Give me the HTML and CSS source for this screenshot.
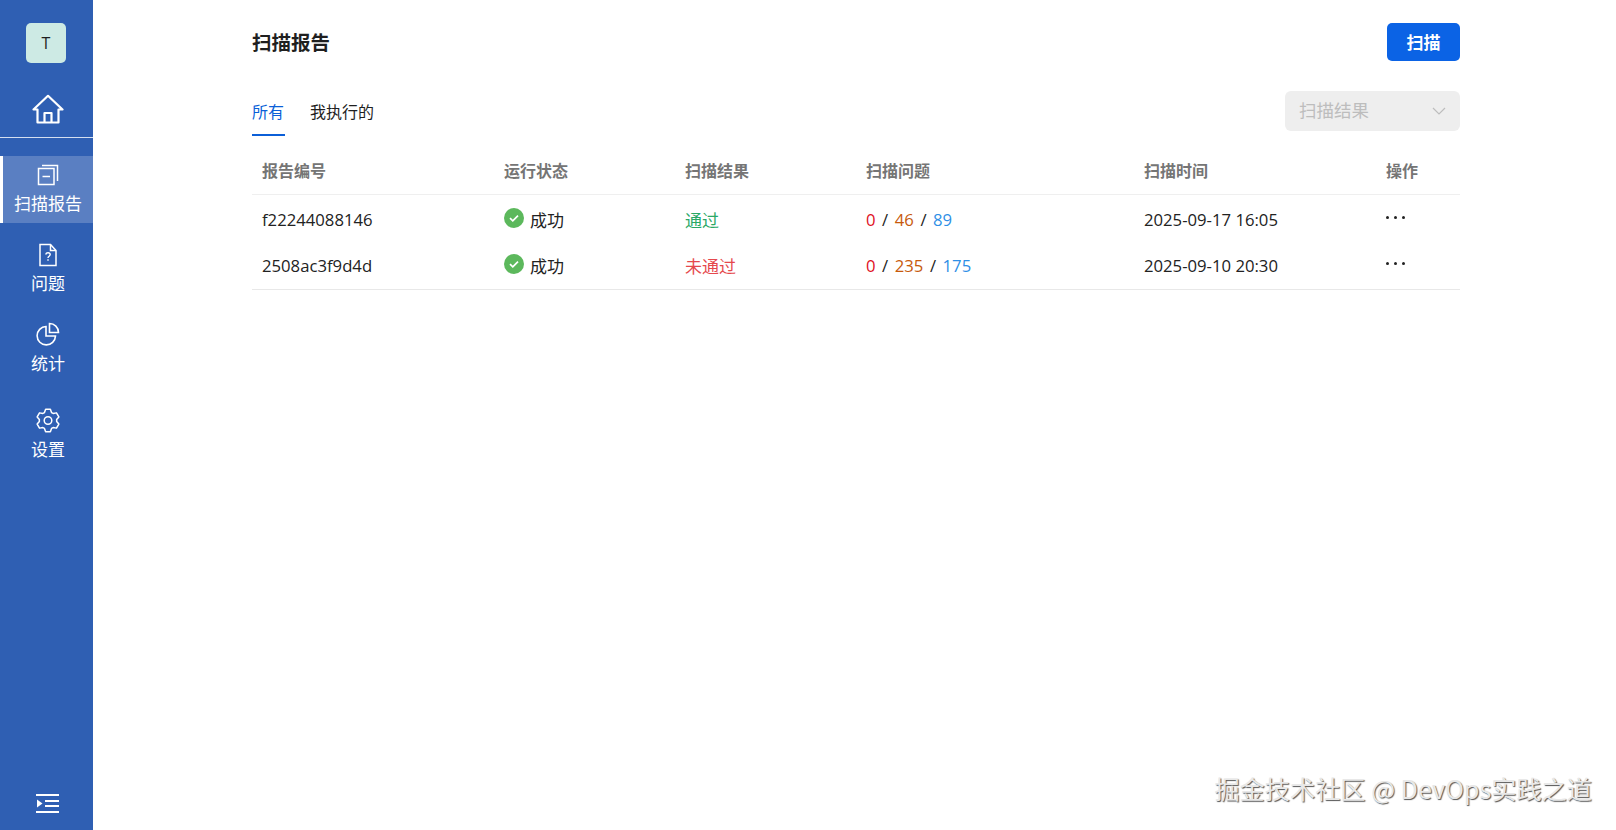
FILE: index.html
```html
<!DOCTYPE html>
<html lang="zh-CN">
<head>
  <meta charset="UTF-8" />
  <title>扫描报告</title>
  <link rel="stylesheet" href="styles.css">
</head>
<body>
  <aside class="sidebar">
    <div class="avatar">T</div>
    <a class="home-link">
      <svg width="32" height="30" viewBox="0 0 32 30" fill="none" stroke="#fff" stroke-width="2.2" stroke-linejoin="round"><path d="M1.5 15.5 16 1.8l14.5 13.7h-4V28.5h-21V15.5z"/><path d="M12.5 28.5V19h7v9.500"/></svg>
    </a>
    <nav class="nav">
      <a class="nav-item active">
        <svg width="22" height="22" viewBox="0 0 22 22" fill="none" stroke="#fff" stroke-width="1.500"><rect x="1.500" y="4.500" width="15.500" height="16"/><path d="M5 1.500h15.500V17"/><path d="M5.500 12.500h7.500"/></svg>
        <span>扫描报告</span>
      </a>
      <a class="nav-item">
        <svg width="22" height="24" viewBox="0 0 22 24" fill="none" stroke="#fff" stroke-width="1.500"><path d="M3 1.500h10.500l5.500 6v15H3z"/><path d="M13.500 1.500v6h5.500"/><path d="M8.700 11.500c.3-1.300 1.200-1.800 2.300-1.800 1.300 0 2.200.8 2.200 1.900 0 1.600-2.200 1.600-2.200 3.300" stroke-width="1.400"/><path d="M11 16.200v1.600" stroke-width="1.400"/></svg>
        <span>问题</span>
      </a>
      <a class="nav-item stats">
        <svg width="24" height="24" viewBox="0 0 24 24" fill="none" stroke="#fff" stroke-width="1.600"><path d="M10 4.500a9.200 9.200 0 1 0 9.500 9.500H10z"/><path d="M13.500 1.500a9 9 0 0 1 9 9h-9z"/></svg>
        <span>统计</span>
      </a>
      <a class="nav-item settings">
        <svg width="24" height="25" viewBox="0 0 24 25" fill="none" stroke="#fff" stroke-width="1.500" stroke-linejoin="round"><path d="M8.460 4.550 9.630 1.350H14.370L15.540 4.550 17.115 5.460 20.470 4.870 22.840 8.980 20.655 11.590V13.410L22.840 16.020 20.470 20.130 17.115 19.540 15.540 20.450 14.370 23.650H9.630L8.460 20.450 6.885 19.540 3.530 20.130 1.160 16.020 3.345 13.410V11.590L1.160 8.980 3.530 4.870 6.885 5.460z"/><circle cx="12" cy="12.500" r="3.800"/></svg>
        <span>设置</span>
      </a>
    </nav>
    <a class="collapse">
      <svg width="24" height="20" viewBox="0 0 24 20" fill="#fff"><rect x="0" y="0" width="23" height="2"/><rect x="9" y="6" width="14" height="2"/><rect x="9" y="11" width="14" height="2"/><rect x="0" y="17" width="23" height="2"/><path d="M1 5.500 6.500 9.500 1 13.500z"/></svg>
    </a>
  </aside>

  <main class="content">
    <header class="page-head">
      <h1>扫描报告</h1>
      <button class="scan-btn">扫描</button>
    </header>

    <div class="toolbar">
      <div class="tabs">
        <a class="tab active">所有</a>
        <a class="tab">我执行的</a>
      </div>
      <div class="select">
        <span>扫描结果</span>
        <svg width="14" height="8" viewBox="0 0 14 8" fill="none" stroke="#bdbdbd" stroke-width="1.200"><path d="M1 1l6 6 6-6"/></svg>
      </div>
    </div>

    <table class="report-table">
      <colgroup>
        <col class="c-id"><col class="c-status"><col class="c-result"><col class="c-issues"><col class="c-time"><col class="c-op">
      </colgroup>
      <thead>
        <tr>
          <th>报告编号</th>
          <th>运行状态</th>
          <th>扫描结果</th>
          <th>扫描问题</th>
          <th>扫描时间</th>
          <th>操作</th>
        </tr>
      </thead>
      <tbody>
        <tr>
          <td>f22244088146</td>
          <td><span class="status"><svg width="20" height="20" viewBox="0 0 20 20"><circle cx="10" cy="10" r="10" fill="#5cb85c"/><path d="M6 10.200l2.800 2.600L14 7.600" fill="none" stroke="#fff" stroke-width="1.700"/></svg>成功</span></td>
          <td class="pass">通过</td>
          <td class="issues"><span class="sev-high">0</span> / <span class="sev-mid">46</span> / <span class="sev-low">89</span></td>
          <td>2025-09-17 16:05</td>
          <td><span class="more"><i></i><i></i><i></i></span></td>
        </tr>
        <tr>
          <td>2508ac3f9d4d</td>
          <td><span class="status"><svg width="20" height="20" viewBox="0 0 20 20"><circle cx="10" cy="10" r="10" fill="#5cb85c"/><path d="M6 10.200l2.800 2.600L14 7.600" fill="none" stroke="#fff" stroke-width="1.700"/></svg>成功</span></td>
          <td class="fail">未通过</td>
          <td class="issues"><span class="sev-high">0</span> / <span class="sev-mid">235</span> / <span class="sev-low">175</span></td>
          <td>2025-09-10 20:30</td>
          <td><span class="more"><i></i><i></i><i></i></span></td>
        </tr>
      </tbody>
    </table>
  </main>

  <div class="watermark">掘金技术社区 @ DevOps实践之道</div>
</body>
</html>
```

FILE: styles.css
```css
* { box-sizing: border-box; }
html, body { height: 100%; }
body {
  margin: 0;
  height: 830px;
  display: flex;
  overflow: hidden;
  background: #fff;
  color: #1f1f1f;
  font-family: "Open Sans", "Noto Sans CJK SC", sans-serif;
  font-size: 16px;
}

/* sidebar */
.sidebar {
  width: 93px;
  flex-shrink: 0;
  display: flex;
  flex-direction: column;
  align-items: center;
  background: #2f5fb3;
  color: #fff;
}
.avatar {
  width: 40px;
  height: 40px;
  margin-top: 23px;
  margin-right: 1px;
  display: flex;
  align-items: center;
  justify-content: center;
  border-radius: 5px;
  background: #cdeae4;
  color: #1f1f1f;
  font-size: 16px;
}
.home-link {
  width: 100%;
  height: 75px;
  padding: 31px 0 0 3px;
  display: flex;
  justify-content: center;
  border-bottom: 1px solid #d5dff0;
}
.nav {
  width: 100%;
  margin-top: 18px;
  display: flex;
  flex-direction: column;
}
.nav-item {
  height: 67px;
  margin-bottom: 12px;
  display: flex;
  flex-direction: column;
  align-items: center;
  padding: 8px 0 0 3px;
  font-size: 17px;
  line-height: 24px;
}
.nav-item span { margin-top: 5px; }
.nav-item.active {
  background: #5a7fc2;
  border-left: 3px solid #fff;
  padding-left: 0;
}
.nav-item.active span { margin-top: 6px; }
.nav-item.stats span { margin-top: 6px; }
.nav-item.settings { margin-top: 7px; }
.collapse {
  margin-top: auto;
  margin-bottom: 16px;
  margin-left: 3px;
  display: flex;
}

/* main */
.content {
  flex: 1;
  padding: 23px 156px 0 159px;
}
.page-head {
  display: flex;
  justify-content: space-between;
  align-items: center;
  height: 38px;
}
h1 {
  margin: 0 0 2px;
  font-size: 19.500px;
  font-weight: 700;
  color: #1f1f1f;
}
.scan-btn {
  width: 73px;
  height: 38px;
  padding: 0 0 2px;
  border: none;
  border-radius: 5px;
  background: #0b63e5;
  color: #fff;
  font-family: inherit;
  font-size: 17px;
  font-weight: 700;
}
.toolbar {
  margin-top: 30px;
  display: flex;
  justify-content: space-between;
  align-items: flex-start;
}
.tabs {
  display: flex;
  gap: 25px;
}
.tab {
  height: 45px;
  padding-top: 9px;
  line-height: 24px;
  font-size: 16px;
}
.tab.active {
  padding-right: 1px;
  color: #0b5fd8;
  border-bottom: 2px solid #0b5fd8;
}
.select {
  width: 175px;
  height: 40px;
  padding: 0 14px 4px;
  display: flex;
  align-items: center;
  justify-content: space-between;
  border-radius: 6px;
  background: #eeeeee;
  color: #bdbdbd;
  font-size: 17.500px;
}
.select svg { margin-top: 4px; }

/* table */
.report-table {
  width: 1208px;
  margin-top: 12px;
  table-layout: fixed;
  border-collapse: collapse;
}
.c-id { width: 242px; }
.c-status { width: 181px; }
.c-result { width: 181px; }
.c-issues { width: 278px; }
.c-time { width: 242px; }
.c-op { width: 84px; }
th, td {
  padding: 0 0 0 10px;
  text-align: left;
}
th {
  height: 46px;
  padding-bottom: 1px;
  border-bottom: 1px solid #efefef;
  color: #757575;
  font-size: 16px;
  font-weight: 700;
}
td {
  height: 46px;
  color: #222;
  font-size: 16.700px;
}
tbody tr:first-child td { height: 50px; }
tbody tr:last-child td {
  height: 45px;
  padding-bottom: 2px;
  border-bottom: 1px solid #e8e8e8;
}
.issues { word-spacing: 2.200px; }
.status {
  display: flex;
  align-items: center;
  gap: 6px;
  font-size: 17px;
}
.status svg { margin-bottom: 3px; }
td.pass { color: #2aa866; font-size: 17px; }
td.fail { color: #e5484d; font-size: 17px; }
.sev-high { color: #e0101e; }
.sev-mid { color: #c75a0c; }
.sev-low { color: #2f8fe6; }
.more {
  display: flex;
  gap: 5px;
  margin-bottom: 4px;
  height: 3px;
}
.more i {
  width: 3px;
  height: 3px;
  border-radius: 50%;
  background: #222;
}

.watermark {
  position: absolute;
  right: 24px;
  bottom: 27px;
  font-family: "Noto Sans CJK SC", sans-serif;
  font-size: 25.200px;
  line-height: 30px;
  color: #e8e8e8;
  text-shadow: 1px 1px 1px #555;
  white-space: nowrap;
}
```
